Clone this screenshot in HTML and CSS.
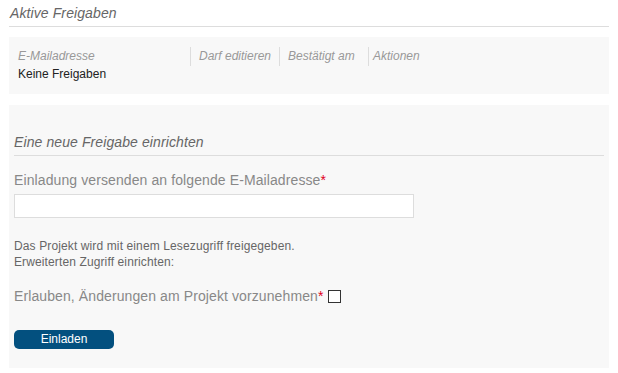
FILE: index.html
```html
<!DOCTYPE html>
<html lang="de">
    <head>
        <meta charset="utf-8">
        <link rel="stylesheet" href="styles.css">
    </head>
    <body>
        <div class="page">
            <h2 class="section-title">Aktive Freigaben</h2>
            <section class="panel shares">
                <div class="shares-head">
                    <div class="col col-email">E-Mailadresse</div>
                    <div class="col col-edit">Darf editieren</div>
                    <div class="col col-date">Bestätigt am</div>
                    <div class="col col-actions">Aktionen</div>
                </div>
                <div class="shares-empty">Keine Freigaben</div>
            </section>
            <section class="panel invite">
                <h3 class="section-title">Eine neue Freigabe einrichten</h3>
                <form class="invite-form">
                    <label class="field-label" for="email">Einladung versenden an folgende E-Mailadresse<span class="req">*</span></label>
                    <input class="text-input" type="text" id="email">
                    <p class="hint">
                        Das Projekt wird mit einem Lesezugriff freigegeben.<br/>
                        Erweiterten Zugriff einrichten:
                    </p>
                    <div class="check-row">
                        <label class="field-label" for="can-edit">Erlauben, Änderungen am Projekt vorzunehmen<span class="req">*</span></label>
                        <input class="checkbox" type="checkbox" id="can-edit">
                    </div>
                    <button class="btn" type="button">Einladen</button>
                </form>
            </section>
        </div>
    </body>
</html>
```

FILE: styles.css
```css
* {
    box-sizing: border-box;
}

body {
    margin: 0;
    font-family: "Liberation Sans", Arial, sans-serif;
    font-size: 12px;
    color: #333;
    background: #ffffff;
}

.page {
    width: 600px;
    margin-left: 9px;
    padding-top: 5px;
}

.section-title {
    margin: 0;
    padding: 0 0 4px 1px;
    font-size: 14px;
    line-height: 17px;
    font-weight: normal;
    font-style: italic;
    letter-spacing: 0.1px;
    color: #666;
    border-bottom: 1px solid #dddddd;
}

.panel {
    background-color: #f8f8f8;
}

.shares {
    margin-top: 10px;
    padding: 10px 9px 12px;
}

.shares-head {
    display: grid;
    grid-template-columns: 172px 89px 89px auto;
}
.shares-head .col {
    line-height: 19px;
    font-style: italic;
    color: #999;
}
.shares-head .col + .col {
    border-left: 1px solid #dddddd;
    padding-left: 8px;
}
.shares-head .col-actions {
    padding-left: 4px !important;
}

.shares-empty {
    line-height: 16px;
    color: #222;
}

.invite {
    margin-top: 11px;
    padding: 29px 5px 19px;
}

.invite .section-title {
    padding-left: 0;
}

.invite-form {
    display: flex;
    flex-direction: column;
    align-items: flex-start;
}

.field-label {
    font-size: 14px;
    line-height: 16px;
    letter-spacing: 0.1px;
    color: #888;
}
.req {
    color: #e0001a;
}

.invite-form > .field-label {
    margin-top: 16px;
}

.text-input {
    margin-top: 6px;
    width: 400px;
    height: 24px;
    border: 1px solid #dddddd;
    background: #ffffff;
    font: inherit;
}

.hint {
    margin: 20px 0 0;
    line-height: 16px;
    letter-spacing: 0.12px;
    color: #666;
}

.check-row {
    margin-top: 18px;
    display: flex;
    align-items: center;
    gap: 4px;
}

.checkbox {
    appearance: none;
    margin: 1px 0 0;
    width: 13px;
    height: 13px;
    border: 1px solid #333;
    background: #ffffff;
}

.btn {
    margin-top: 26px;
    width: 100px;
    height: 19px;
    padding: 0;
    border: none;
    border-radius: 5px;
    background-color: #03507f;
    color: #ffffff;
    font-family: inherit;
    font-size: 12px;
    line-height: 19px;
}
```
